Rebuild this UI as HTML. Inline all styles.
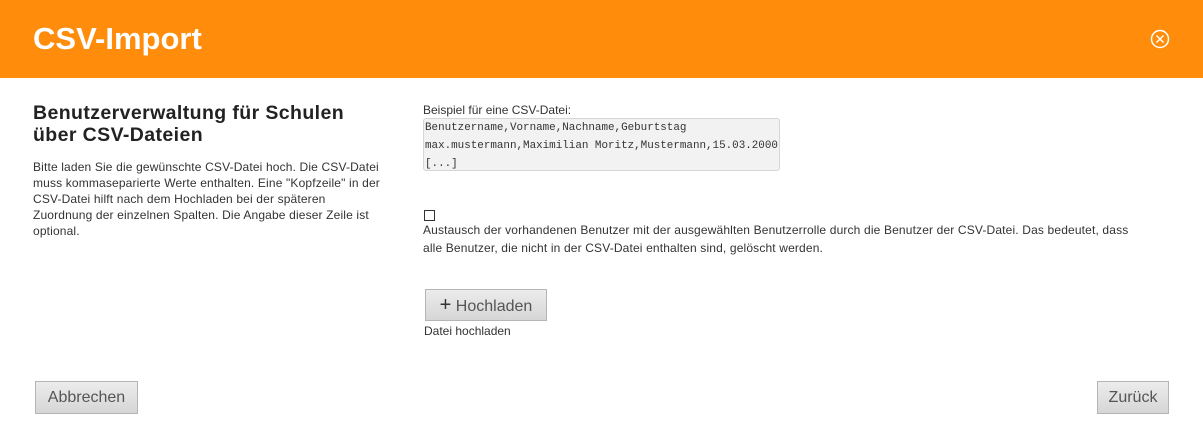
<!DOCTYPE html>
<html><head><meta charset="utf-8"><style>
*{margin:0;padding:0;box-sizing:border-box}
body{width:1203px;height:447px;background:#fff;font-family:"Liberation Sans",sans-serif;color:#333;position:relative;overflow:hidden}
.hdr{position:absolute;left:0;top:0;width:1203px;height:78px;background:#ff8c0a}
.hdr h1{position:absolute;left:33px;top:21px;font-size:31px;font-weight:bold;color:#fff;letter-spacing:0px}
.x{position:absolute;left:1150px;top:29px}
.abs{position:absolute;white-space:nowrap}
h2{position:absolute;left:33px;top:102px;font-size:19.5px;line-height:22px;font-weight:bold;color:#222;letter-spacing:0.4px}
.p{left:33px;top:159px;font-size:12px;line-height:16px;color:#333;letter-spacing:0.15px}
.lbl{left:423px;top:103px;font-size:12px}
.code{left:423px;top:118px;width:357px;height:53px;background:#f2f2f2;border:1px solid #d6d6d6;border-radius:3px;font-family:"Liberation Mono",monospace;font-size:10.9px;line-height:18px;padding:0 0 0 1px;color:#333;overflow:hidden}
.cb{left:424px;top:210px;width:11px;height:11px;border:1px solid #333}
.txt{left:423px;top:221px;font-size:12px;line-height:18px;letter-spacing:0.15px}
.btn{position:absolute;background:linear-gradient(#ececec,#d6d6d6);border:1px solid #b5b5b5;font-size:16px;color:#555;text-align:center}
</style></head><body>
<div class="hdr"><h1>CSV-Import</h1>
<svg class="x" width="20" height="20" viewBox="0 0 20 20"><circle cx="10" cy="10" r="8.5" fill="none" stroke="#fff" stroke-width="1.5"/><path d="M6.5 6.5L13.5 13.5M13.5 6.5L6.5 13.5" stroke="#fff" stroke-width="1.5"/></svg></div>
<h2>Benutzerverwaltung für Schulen<br>über CSV-Dateien</h2>
<div class="abs p">Bitte laden Sie die gewünschte CSV-Datei hoch. Die CSV-Datei<br>muss kommaseparierte Werte enthalten. Eine "Kopfzeile" in der<br>CSV-Datei hilft nach dem Hochladen bei der späteren<br>Zuordnung der einzelnen Spalten. Die Angabe dieser Zeile ist<br>optional.</div>
<div class="abs lbl">Beispiel für eine CSV-Datei:</div>
<div class="abs code">Benutzername,Vorname,Nachname,Geburtstag<br>max.mustermann,Maximilian Moritz,Mustermann,15.03.2000<br>[...]</div>
<div class="abs cb"></div>
<div class="abs txt">Austausch der vorhandenen Benutzer mit der ausgewählten Benutzerrolle durch die Benutzer der CSV-Datei. Das bedeutet, dass<br>alle Benutzer, die nicht in der CSV-Datei enthalten sind, gelöscht werden.</div>
<div class="btn" style="left:425px;top:289px;width:122px;height:32px;line-height:30px"><span style="font-size:20px;color:#333">+</span> Hochladen</div>
<div class="abs" style="left:424px;top:324px;font-size:12px;color:#333">Datei hochladen</div>
<div class="btn" style="left:35px;top:381px;width:103px;height:33px;line-height:31px">Abbrechen</div>
<div class="btn" style="left:1097px;top:381px;width:72px;height:33px;line-height:31px">Zurück</div>
</body></html>
